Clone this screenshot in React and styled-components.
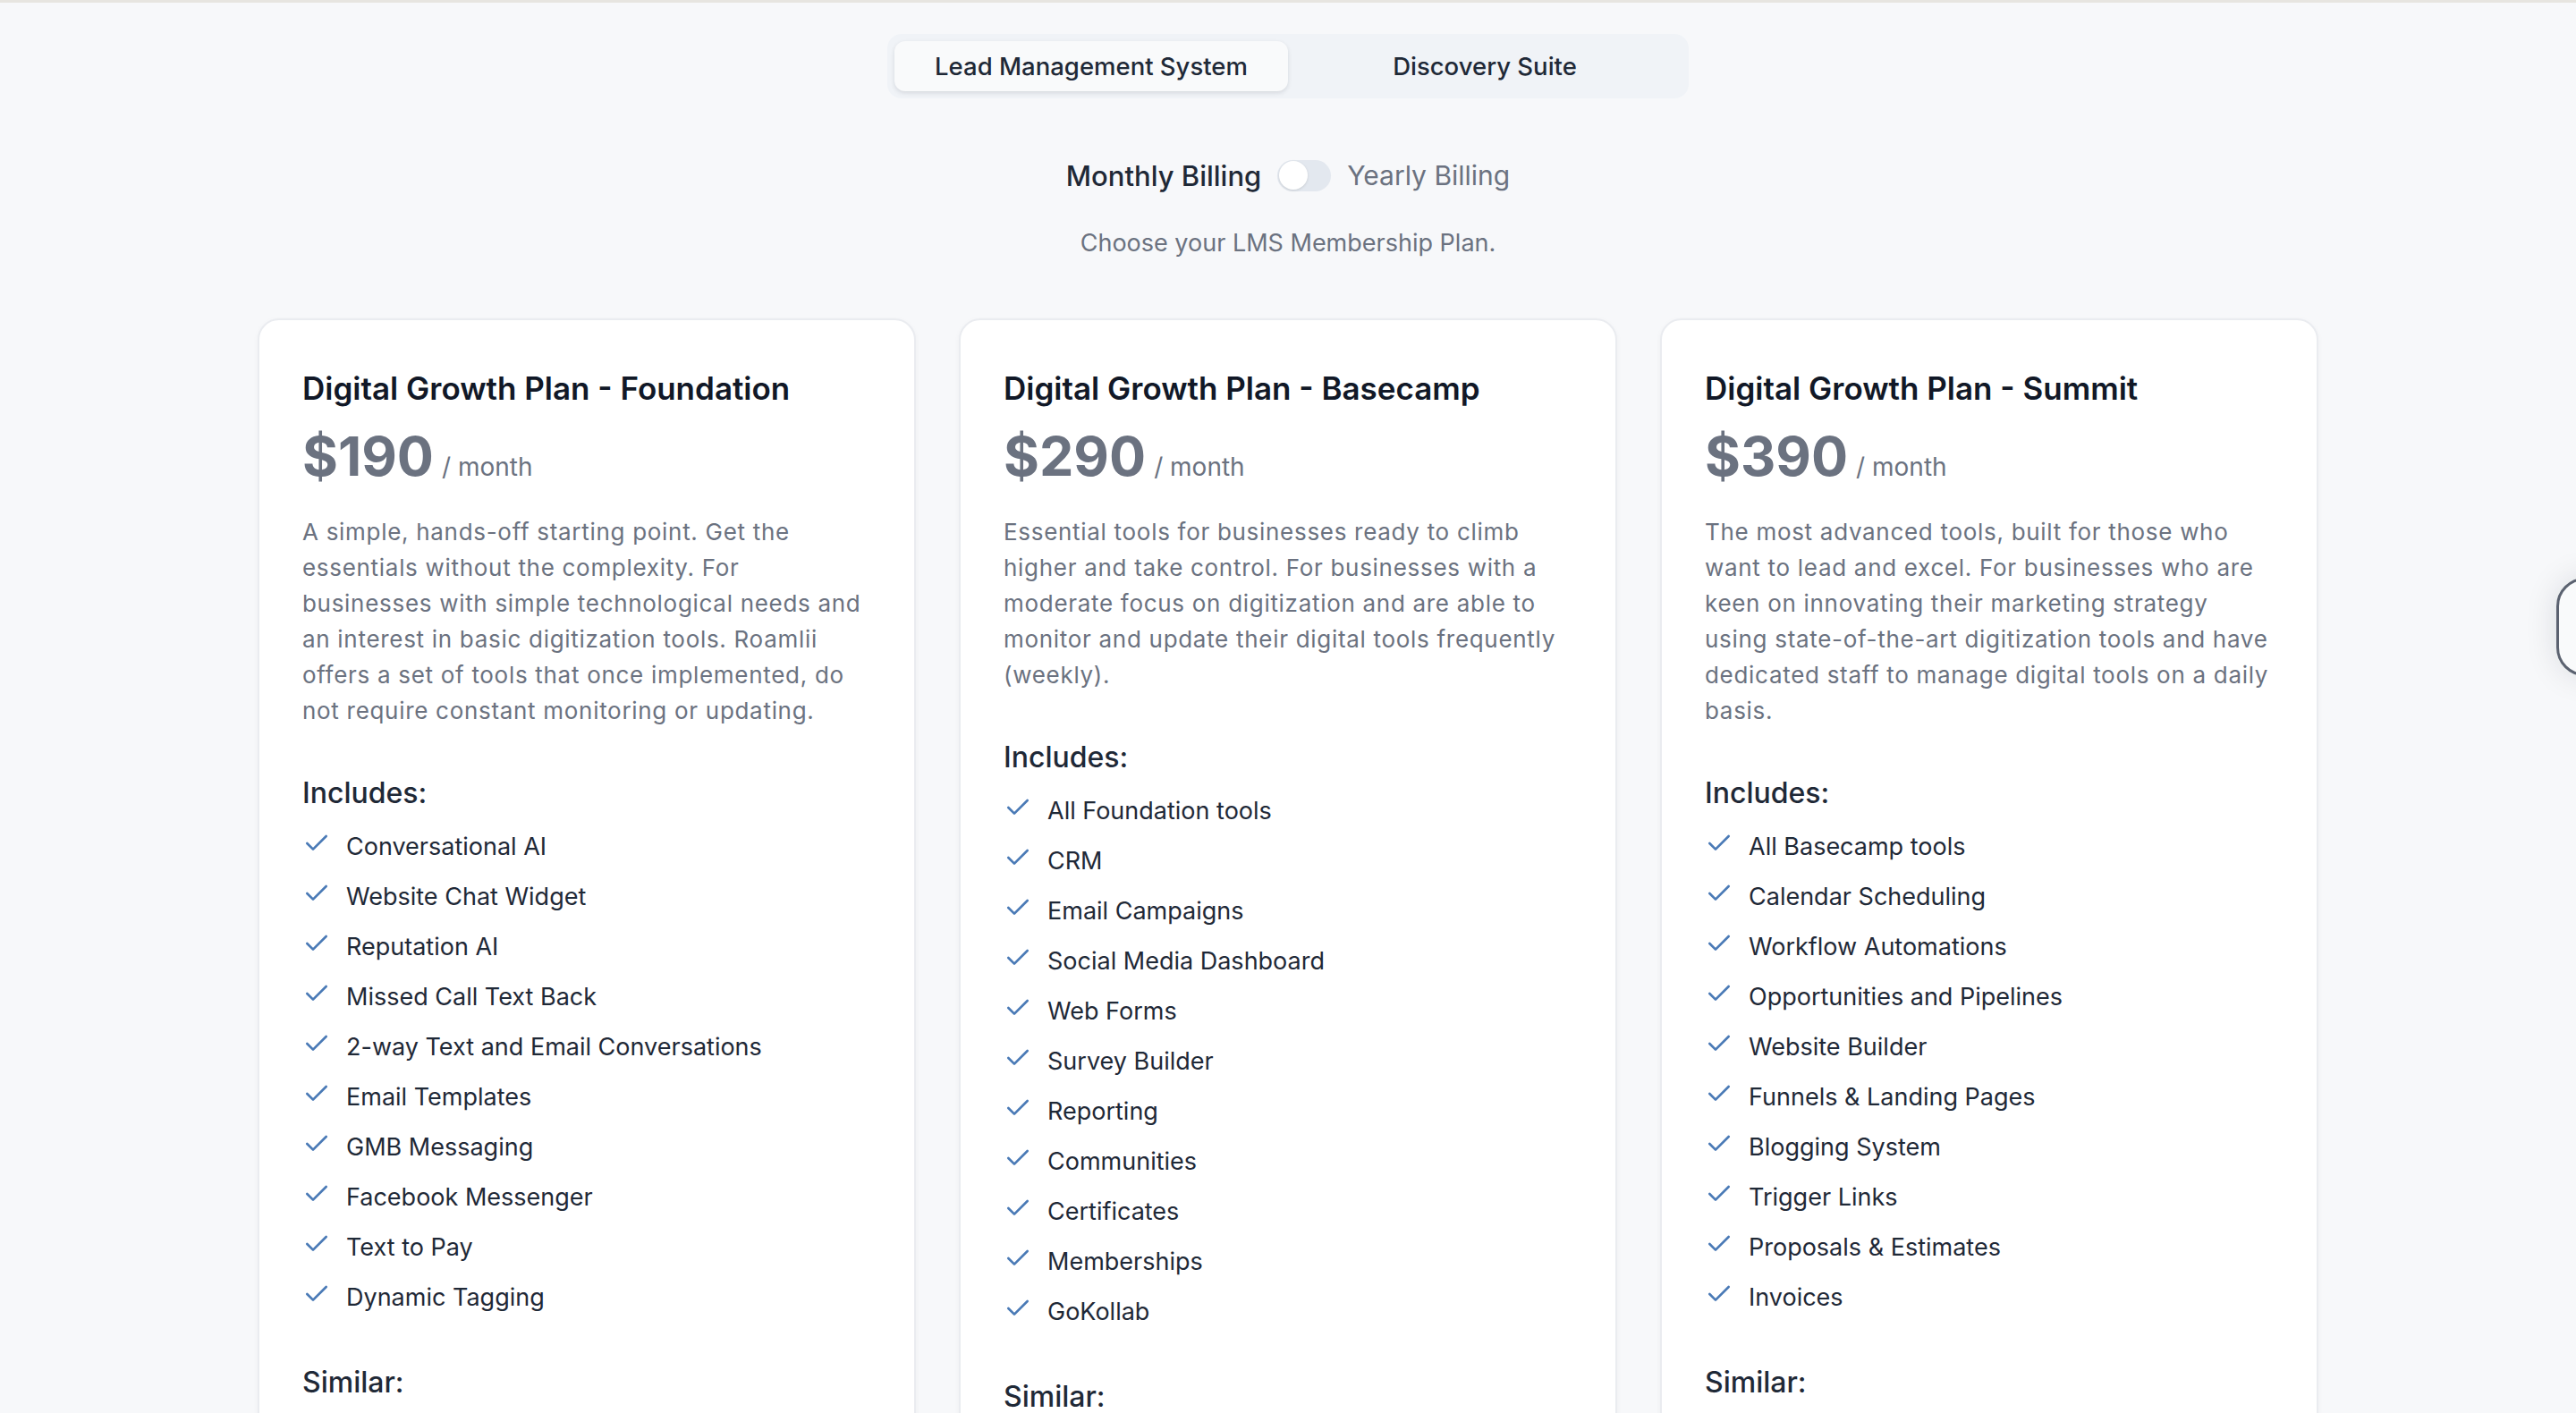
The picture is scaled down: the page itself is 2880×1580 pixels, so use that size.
import React, { useState } from 'react';
import styled, { createGlobalStyle } from 'styled-components';
import { Check } from 'lucide-react';

const Global = createGlobalStyle`
  html, body {
    margin: 0;
    padding: 0;
    background: #f7f8fa;
  }
  body {
    font-family: Inter, "Noto Sans", "Liberation Sans", sans-serif;
    color: #1f2937;
    -webkit-font-smoothing: antialiased;
  }
`;

const Page = styled.main`
  min-height: 100vh;
  border-top: 3px solid #e7e5e0;
  box-sizing: border-box;
  padding-top: 35px;
  display: flex;
  flex-direction: column;
  align-items: center;
`;

const Tabs = styled.div`
  width: 896px;
  box-sizing: border-box;
  padding: 8px;
  background: #f0f3f7;
  border-radius: 16px;
  display: grid;
  grid-template-columns: 1fr 1fr;
`;

const Tab = styled.button`
  height: 56px;
  border: none;
  border-radius: 12px;
  font-family: inherit;
  font-size: 27.5px;
  font-weight: 500;
  color: #1f2937;
  cursor: pointer;
  background: ${(p) => (p.$active ? '#f9fafb' : 'transparent')};
  box-shadow: ${(p) => (p.$active ? '0 2px 5px rgba(15, 23, 42, 0.12)' : 'none')};
`;

const Billing = styled.div`
  margin-top: 62px;
  display: flex;
  align-items: center;
  gap: 18px;
  height: 48px;
`;

const BillLabel = styled.span`
  font-size: ${(p) => (p.$on ? '31px' : '30px')};
  font-weight: ${(p) => (p.$on ? 500 : 400)};
  color: ${(p) => (p.$on ? '#1f2937' : '#6b7280')};
`;

const Switch = styled.button`
  width: 60px;
  height: 35px;
  padding: 0;
  border: none;
  border-radius: 18px;
  background: #e3e8ef;
  display: flex;
  align-items: center;
  justify-content: ${(p) => (p.$on ? 'flex-end' : 'flex-start')};
  cursor: pointer;
`;

const Knob = styled.span`
  width: 32px;
  height: 32px;
  margin: 0 2px;
  border-radius: 50%;
  background: #ffffff;
  box-shadow: 0 1px 3px rgba(0, 0, 0, 0.12);
`;

const Lead = styled.p`
  margin: 32px 0 0;
  font-size: 27px;
  line-height: 40px;
  color: #6b7280;
`;

const Grid = styled.section`
  margin-top: 64px;
  width: 2304px;
  display: grid;
  grid-template-columns: repeat(3, 1fr);
  gap: 48px;
`;

const Card = styled.article`
  background: #ffffff;
  border: 2px solid #eaecf0;
  border-radius: 24px;
  box-shadow: 0 2px 6px rgba(15, 23, 42, 0.04);
  padding: 48px 48px 64px;
`;

const Title = styled.h2`
  margin: 0;
  font-size: 35px;
  line-height: 56px;
  font-weight: 600;
  color: #111827;
`;

const PriceRow = styled.div`
  margin-top: 12px;
  display: flex;
  align-items: baseline;
  gap: 9px;
  color: #6b7280;
`;

const Amount = styled.span`
  font-size: 61px;
  line-height: 72px;
  font-weight: 700;
`;

const Per = styled.span`
  font-size: 28px;
`;

const Desc = styled.p`
  margin: 29px 0 0;
  font-size: 26px;
  line-height: 40px;
  letter-spacing: 0.7px;
  color: #6b7280;
`;

const Section = styled.h3`
  margin: ${(p) => (p.$last ? '51px' : '48px')} 0 0;
  font-size: 32px;
  line-height: 48px;
  font-weight: 500;
  color: #1f2937;
`;

const List = styled.ul`
  list-style: none;
  margin: 16px 0 0;
  padding: 0;
  display: flex;
  flex-direction: column;
  gap: 16px;
`;

const Item = styled.li`
  display: flex;
  align-items: flex-start;
  gap: 17px;
  font-size: 27px;
  line-height: 40px;
  color: #1f2937;

  svg {
    flex: none;
    color: #4a7ab6;
  }
`;

const SideTab = styled.div`
  position: fixed;
  top: 646px;
  right: -48px;
  width: 64px;
  height: 104px;
  border-radius: 32px;
  background: #f9fafb;
  border: 3px solid #5b6270;
  box-shadow: 0 0 36px rgba(15, 23, 42, 0.12);
`;

const plans = [
  {
    name: 'Digital Growth Plan - Foundation',
    price: '$190',
    desc: 'A simple, hands-off starting point. Get the essentials without the complexity. For businesses with simple technological needs and an interest in basic digitization tools. Roamlii offers a set of tools that once implemented, do not require constant monitoring or updating.',
    items: [
      'Conversational AI',
      'Website Chat Widget',
      'Reputation AI',
      'Missed Call Text Back',
      '2-way Text and Email Conversations',
      'Email Templates',
      'GMB Messaging',
      'Facebook Messenger',
      'Text to Pay',
      'Dynamic Tagging',
    ],
  },
  {
    name: 'Digital Growth Plan - Basecamp',
    price: '$290',
    desc: 'Essential tools for businesses ready to climb higher and take control. For businesses with a moderate focus on digitization and are able to monitor and update their digital tools frequently (weekly).',
    items: [
      'All Foundation tools',
      'CRM',
      'Email Campaigns',
      'Social Media Dashboard',
      'Web Forms',
      'Survey Builder',
      'Reporting',
      'Communities',
      'Certificates',
      'Memberships',
      'GoKollab',
    ],
  },
  {
    name: 'Digital Growth Plan - Summit',
    price: '$390',
    desc: 'The most advanced tools, built for those who want to lead and excel. For businesses who are keen on innovating their marketing strategy using state-of-the-art digitization tools and have dedicated staff to manage digital tools on a daily basis.',
    items: [
      'All Basecamp tools',
      'Calendar Scheduling',
      'Workflow Automations',
      'Opportunities and Pipelines',
      'Website Builder',
      'Funnels & Landing Pages',
      'Blogging System',
      'Trigger Links',
      'Proposals & Estimates',
      'Invoices',
    ],
  },
];

const PlanCard = ({ plan }) => (
  <Card>
    <Title>{plan.name}</Title>
    <PriceRow>
      <Amount>{plan.price}</Amount>
      <Per>/ month</Per>
    </PriceRow>
    <Desc>{plan.desc}</Desc>
    <Section>Includes:</Section>
    <List>
      {plan.items.map((it) => (
        <Item key={it}>
          <Check size={32} strokeWidth={2} />
          <span>{it}</span>
        </Item>
      ))}
    </List>
    <Section $last>Similar:</Section>
  </Card>
);

const App = () => {
  const [tab, setTab] = useState(0);
  const [yearly, setYearly] = useState(false);

  return (
    <>
      <Global />
      <Page>
        <Tabs>
          <Tab $active={tab === 0} onClick={() => setTab(0)}>Lead Management System</Tab>
          <Tab $active={tab === 1} onClick={() => setTab(1)}>Discovery Suite</Tab>
        </Tabs>
        <Billing>
          <BillLabel $on={!yearly}>Monthly Billing</BillLabel>
          <Switch $on={yearly} onClick={() => setYearly(!yearly)}>
            <Knob />
          </Switch>
          <BillLabel $on={yearly}>Yearly Billing</BillLabel>
        </Billing>
        <Lead>Choose your LMS Membership Plan.</Lead>
        <Grid>
          {plans.map((p) => (
            <PlanCard key={p.name} plan={p} />
          ))}
        </Grid>
      </Page>
      <SideTab />
    </>
  );
};

export default App;
